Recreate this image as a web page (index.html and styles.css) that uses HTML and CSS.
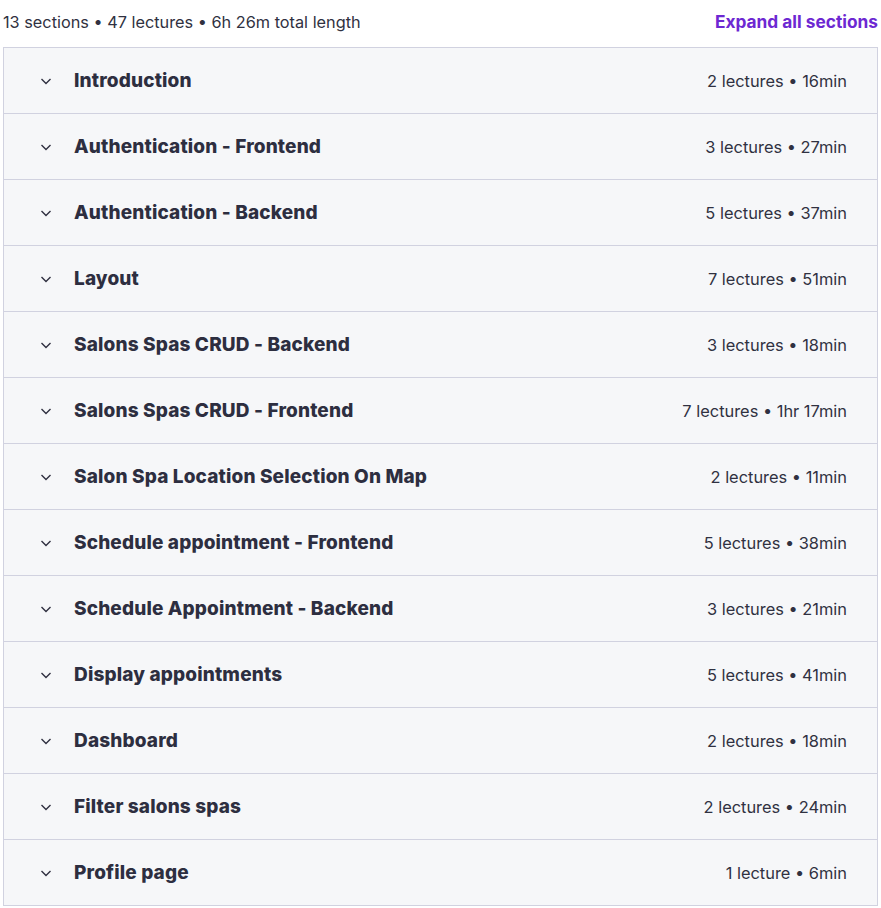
FILE: index.html
```html
<!DOCTYPE html>
<html>
<head>
<meta charset="utf-8">
<link rel="stylesheet" href="styles.css">
</head>
<body>
<div class="curriculum">
  <div class="summary">
    <span class="stats">13 sections • 47 lectures • 6h 26m total length</span>
    <button class="expand">Expand all sections</button>
  </div>
  <div class="sections">
    <div class="section"><span class="chev"><svg viewBox="0 0 12 8" width="12" height="8"><path d="M1.5 2 L6 6.5 L10.5 2" fill="none" stroke="currentColor" stroke-width="1.4"/></svg></span><span class="title">Introduction</span><span class="meta">2 lectures • 16min</span></div>
    <div class="section"><span class="chev"><svg viewBox="0 0 12 8" width="12" height="8"><path d="M1.5 2 L6 6.5 L10.5 2" fill="none" stroke="currentColor" stroke-width="1.4"/></svg></span><span class="title">Authentication - Frontend</span><span class="meta">3 lectures • 27min</span></div>
    <div class="section"><span class="chev"><svg viewBox="0 0 12 8" width="12" height="8"><path d="M1.5 2 L6 6.5 L10.5 2" fill="none" stroke="currentColor" stroke-width="1.4"/></svg></span><span class="title">Authentication - Backend</span><span class="meta">5 lectures • 37min</span></div>
    <div class="section"><span class="chev"><svg viewBox="0 0 12 8" width="12" height="8"><path d="M1.5 2 L6 6.5 L10.5 2" fill="none" stroke="currentColor" stroke-width="1.4"/></svg></span><span class="title">Layout</span><span class="meta">7 lectures • 51min</span></div>
    <div class="section"><span class="chev"><svg viewBox="0 0 12 8" width="12" height="8"><path d="M1.5 2 L6 6.5 L10.5 2" fill="none" stroke="currentColor" stroke-width="1.4"/></svg></span><span class="title">Salons Spas CRUD - Backend</span><span class="meta">3 lectures • 18min</span></div>
    <div class="section"><span class="chev"><svg viewBox="0 0 12 8" width="12" height="8"><path d="M1.5 2 L6 6.5 L10.5 2" fill="none" stroke="currentColor" stroke-width="1.4"/></svg></span><span class="title">Salons Spas CRUD - Frontend</span><span class="meta">7 lectures • 1hr 17min</span></div>
    <div class="section"><span class="chev"><svg viewBox="0 0 12 8" width="12" height="8"><path d="M1.5 2 L6 6.5 L10.5 2" fill="none" stroke="currentColor" stroke-width="1.4"/></svg></span><span class="title">Salon Spa Location Selection On Map</span><span class="meta">2 lectures • 11min</span></div>
    <div class="section"><span class="chev"><svg viewBox="0 0 12 8" width="12" height="8"><path d="M1.5 2 L6 6.5 L10.5 2" fill="none" stroke="currentColor" stroke-width="1.4"/></svg></span><span class="title">Schedule appointment - Frontend</span><span class="meta">5 lectures • 38min</span></div>
    <div class="section"><span class="chev"><svg viewBox="0 0 12 8" width="12" height="8"><path d="M1.5 2 L6 6.5 L10.5 2" fill="none" stroke="currentColor" stroke-width="1.4"/></svg></span><span class="title">Schedule Appointment - Backend</span><span class="meta">3 lectures • 21min</span></div>
    <div class="section"><span class="chev"><svg viewBox="0 0 12 8" width="12" height="8"><path d="M1.5 2 L6 6.5 L10.5 2" fill="none" stroke="currentColor" stroke-width="1.4"/></svg></span><span class="title">Display appointments</span><span class="meta">5 lectures • 41min</span></div>
    <div class="section"><span class="chev"><svg viewBox="0 0 12 8" width="12" height="8"><path d="M1.5 2 L6 6.5 L10.5 2" fill="none" stroke="currentColor" stroke-width="1.4"/></svg></span><span class="title">Dashboard</span><span class="meta">2 lectures • 18min</span></div>
    <div class="section"><span class="chev"><svg viewBox="0 0 12 8" width="12" height="8"><path d="M1.5 2 L6 6.5 L10.5 2" fill="none" stroke="currentColor" stroke-width="1.4"/></svg></span><span class="title">Filter salons spas</span><span class="meta">2 lectures • 24min</span></div>
    <div class="section"><span class="chev"><svg viewBox="0 0 12 8" width="12" height="8"><path d="M1.5 2 L6 6.5 L10.5 2" fill="none" stroke="currentColor" stroke-width="1.4"/></svg></span><span class="title">Profile page</span><span class="meta">1 lecture • 6min</span></div>
  </div>
</div>
</body>
</html>
```

FILE: styles.css
```css
* { box-sizing: border-box; }
html, body { margin: 0; padding: 0; background: #ffffff; }
body {
  font-family: Inter, "Noto Sans", sans-serif;
  color: #303141;
  font-size: 16px;
}
.curriculum {
  width: 875px;
  margin: 0 0 0 3px;
}
.summary {
  display: flex;
  justify-content: space-between;
  align-items: center;
  height: 47px;
  padding-bottom: 4px;
}
.stats {
  font-size: 16.3px;
  color: #303141;
}
.expand {
  border: none;
  background: none;
  padding: 0;
  font-family: inherit;
  font-size: 17.3px;
  font-weight: 700;
  color: #6d28d2;
}
.sections {
  border: 1px solid #d1d2e0;
}
.section {
  display: flex;
  align-items: center;
  height: 66px;
  background: #f6f7f9;
  border-top: 1px solid #d1d2e0;
  padding: 0 30px 0 36px;
}
.section:first-child { border-top: none; height: 65px; }
.chev {
  width: 12px;
  display: flex;
  color: #303141;
  margin-right: 22px;
}
.title {
  font-weight: 800;
  font-size: 19px;
  letter-spacing: 0.15px;
  color: #2d2e40;
  flex: 1;
}
.meta {
  font-size: 16.4px;
}
```
